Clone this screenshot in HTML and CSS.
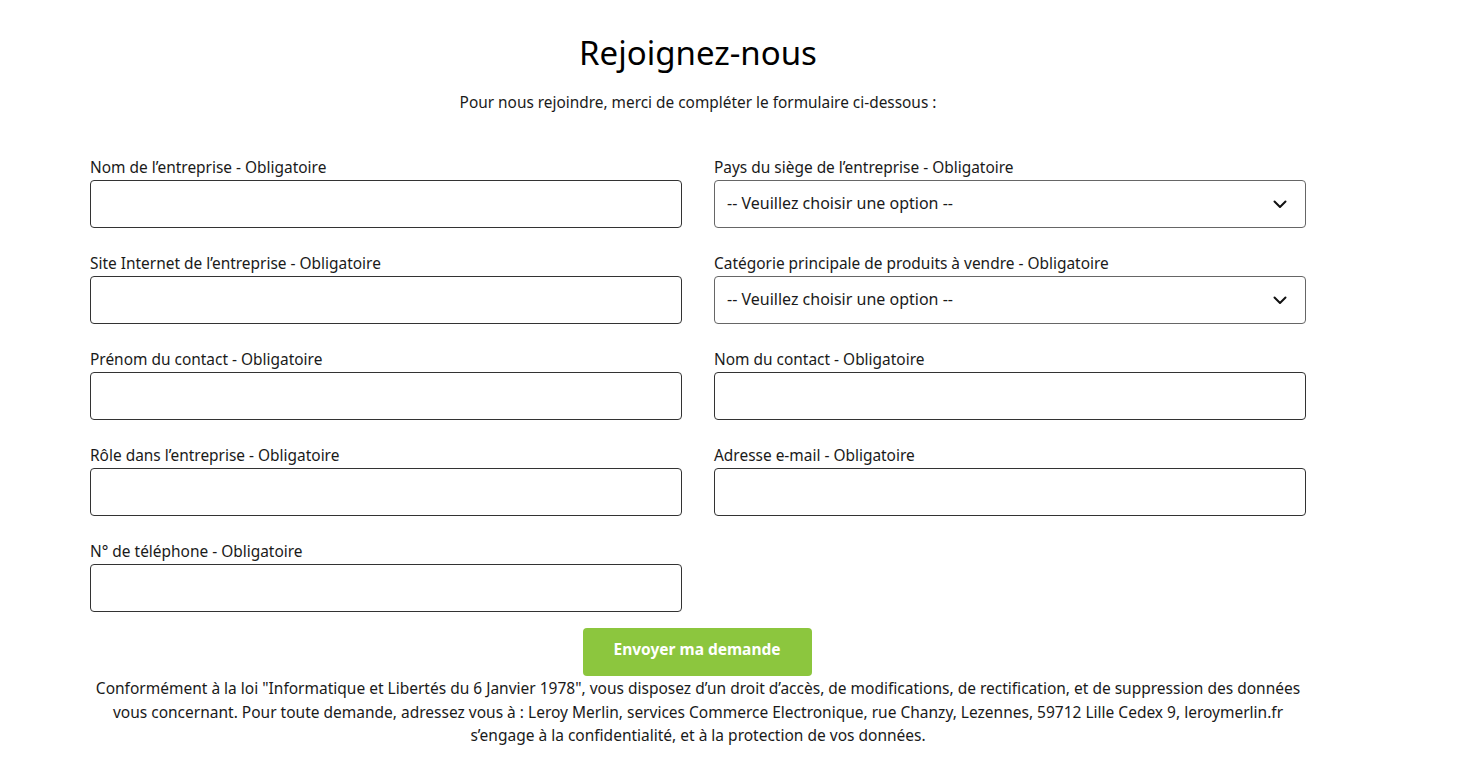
FILE: index.html
```html
<!DOCTYPE html>
<html lang="fr">
<head>
<meta charset="utf-8">
<link rel="stylesheet" href="styles.css">
</head>
<body>
<div class="page">
  <h1 class="title">Rejoignez-nous</h1>
  <p class="intro">Pour nous rejoindre, merci de compléter le formulaire ci-dessous :</p>
  <form class="form">
    <div class="grid">
      <div class="field">
        <label class="label">Nom de l’entreprise - Obligatoire</label>
        <div class="input"></div>
      </div>
      <div class="field">
        <label class="label">Pays du siège de l’entreprise - Obligatoire</label>
        <div class="input select"><span>-- Veuillez choisir une option --</span>
          <svg class="chev" width="14" height="9" viewBox="0 0 14 9"><path d="M1.5 1.5 L7 7 L12.5 1.5" fill="none" stroke="#111" stroke-width="2" stroke-linecap="round" stroke-linejoin="round"/></svg>
        </div>
      </div>
      <div class="field">
        <label class="label">Site Internet de l’entreprise - Obligatoire</label>
        <div class="input"></div>
      </div>
      <div class="field">
        <label class="label">Catégorie principale de produits à vendre - Obligatoire</label>
        <div class="input select"><span>-- Veuillez choisir une option --</span>
          <svg class="chev" width="14" height="9" viewBox="0 0 14 9"><path d="M1.5 1.5 L7 7 L12.5 1.5" fill="none" stroke="#111" stroke-width="2" stroke-linecap="round" stroke-linejoin="round"/></svg>
        </div>
      </div>
      <div class="field">
        <label class="label">Prénom du contact - Obligatoire</label>
        <div class="input"></div>
      </div>
      <div class="field">
        <label class="label">Nom du contact - Obligatoire</label>
        <div class="input"></div>
      </div>
      <div class="field">
        <label class="label">Rôle dans l’entreprise - Obligatoire</label>
        <div class="input"></div>
      </div>
      <div class="field">
        <label class="label">Adresse e-mail - Obligatoire</label>
        <div class="input"></div>
      </div>
      <div class="field">
        <label class="label">N° de téléphone - Obligatoire</label>
        <div class="input"></div>
      </div>
    </div>
    <div class="actions">
      <button type="button" class="btn">Envoyer ma demande</button>
    </div>
    <p class="legal">Conformément à la loi "Informatique et Libertés du 6 Janvier 1978", vous disposez d’un droit d’accès, de modifications, de rectification, et de suppression des données<br>vous concernant. Pour toute demande, adressez vous à : Leroy Merlin, services Commerce Electronique, rue Chanzy, Lezennes, 59712 Lille Cedex 9, leroymerlin.fr<br>s’engage à la confidentialité, et à la protection de vos données.</p>
  </form>
</div>
</body>
</html>
```
FILE: styles.css
```css
* { box-sizing: border-box; }
html, body { margin: 0; padding: 0; background: #fff; }
body {
  font-family: "Noto Sans", "Open Sans", sans-serif;
  color: #1a1a1a;
}
.page {
  width: 1216px;
  margin-left: 90px;
  padding-top: 30px;
}
.title {
  margin: 0;
  text-align: center;
  font-size: 33px;
  font-weight: 400;
  line-height: 46px;
  color: #000;
}
.intro {
  margin: 15px 0 0;
  text-align: center;
  font-size: 15.4px;
  line-height: 24px;
}
.form { margin-top: 41px; }
.grid {
  display: grid;
  grid-template-columns: 592px 592px;
  column-gap: 32px;
  row-gap: 24px;
}
.field { display: flex; flex-direction: column; }
.label {
  font-size: 15.45px;
  line-height: 21px;
  padding-top: 1px;
  margin-bottom: 2px;
}
.input {
  height: 48px;
  border: 1px solid #333;
  border-radius: 4px;
  background: #fff;
}
.select {
  border-color: #666;
  display: flex;
  align-items: center;
  justify-content: space-between;
  padding: 0 18px 2px 12px;
  font-size: 16px;
}
.chev { display: block; margin-top: 2px; }
.actions {
  display: flex;
  justify-content: center;
  margin-top: 16px;
}
.btn {
  width: 229px;
  height: 48px;
  border: none;
  border-radius: 4px;
  background: #8cc63e;
  color: #fff;
  font-family: inherit;
  font-weight: 700;
  font-size: 15.5px;
  padding: 0 0 7px;
  margin-left: -2px;
}
.legal {
  margin: 1px 0 0;
  text-align: center;
  font-size: 15.5px;
  line-height: 23.5px;
}
```
